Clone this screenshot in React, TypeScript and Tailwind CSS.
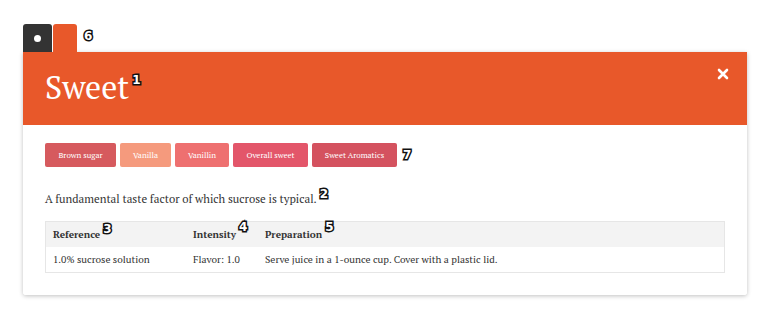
import React from "react";

const serif = "font-['PT_Serif','DejaVu_Serif','Liberation_Serif',serif]";

function Marker({ n, className = "" }: { n: string; className?: string }) {
  return (
    <span
      className={`font-['DejaVu_Sans','Liberation_Sans',sans-serif] font-bold text-[12px] leading-none text-white [-webkit-text-stroke:3px_#111] [paint-order:stroke_fill] ${className}`}
    >
      {n}
    </span>
  );
}

const badges = [
  { label: "Brown sugar", cls: "bg-[#d65a5e] w-[71px]" },
  { label: "Vanilla", cls: "bg-[#f59a7d] w-[51px]" },
  { label: "Vanillin", cls: "bg-[#ee7070] w-[54px]" },
  { label: "Overall sweet", cls: "bg-[#e3566a] w-[75px]" },
  { label: "Sweet Aromatics", cls: "bg-[#d4525f] w-[85px]" },
];

export default function App() {
  return (
    <div className="w-[768px] h-[324px] bg-white pt-[24px] pl-[23px]">
      <div className="flex items-end h-[28px]">
        <div className="w-[29px] h-[28px] bg-[#333333] rounded-t-[3px] flex items-center justify-center">
          <div className="w-[7px] h-[7px] rounded-full bg-white" />
        </div>
        <div className="w-[24px] h-[28px] bg-[#e8582a] rounded-t-[3px] ml-px" />
        <Marker n="6" className="ml-[7px] self-center mb-[4px]" />
      </div>
      <div className="w-[724px] rounded-b-[3px] shadow-[0_1px_4px_rgba(0,0,0,0.25)]">
        <div className="h-[73px] bg-[#e8582a] flex items-start justify-between pl-[22px] pr-[18px]">
          <div className="flex items-start pt-[16px]">
            <span className={`${serif} text-white text-[32px] leading-[38px]`}>Sweet</span>
            <Marker n="1" className="ml-[3px] mt-[6px]" />
          </div>
          <svg width="12" height="12" viewBox="0 0 12 12" className="mt-[16px]">
            <path d="M2 2 L10 10 M10 2 L2 10" stroke="white" strokeWidth="2.6" strokeLinecap="round" />
          </svg>
        </div>
        <div className="bg-white px-[22px] pt-[18px] pb-[22px] rounded-b-[3px]">
          <div className="flex items-center gap-[4px]">
            {badges.map((b) => (
              <div
                key={b.label}
                className={`${b.cls} h-[24px] rounded-[2px] flex items-center justify-center text-white text-[8px] ${serif}`}
              >
                {b.label}
              </div>
            ))}
            <Marker n="7" className="ml-[2px]" />
          </div>
          <div className="flex items-start mt-[23px]">
            <span className={`${serif} text-[11.3px] text-[#333] leading-[18px]`}>
              A fundamental taste factor of which sucrose is typical.
            </span>
            <Marker n="2" className="ml-[3px] -mt-[2px]" />
          </div>
          <div className="mt-[13px] border border-[#e6e6e6] text-[#333]">
            <div className={`flex h-[25px] items-center bg-[#f3f3f3] ${serif} text-[10px] font-bold`}>
              <div className="w-[147px] pl-[7px] flex items-start">
                Reference<Marker n="3" className="ml-[3px] -mt-[4px]" />
              </div>
              <div className="w-[72px] flex items-start">
                Intensity<Marker n="4" className="ml-[3px] -mt-[6px]" />
              </div>
              <div className="flex items-start">
                Preparation<Marker n="5" className="ml-[3px] -mt-[6px]" />
              </div>
            </div>
            <div className={`flex h-[25px] items-center ${serif} text-[10px]`}>
              <div className="w-[147px] pl-[7px]">1.0% sucrose solution</div>
              <div className="w-[72px]">Flavor: 1.0</div>
              <div>Serve juice in a 1-ounce cup. Cover with a plastic lid.</div>
            </div>
          </div>
        </div>
      </div>
    </div>
  );
}
